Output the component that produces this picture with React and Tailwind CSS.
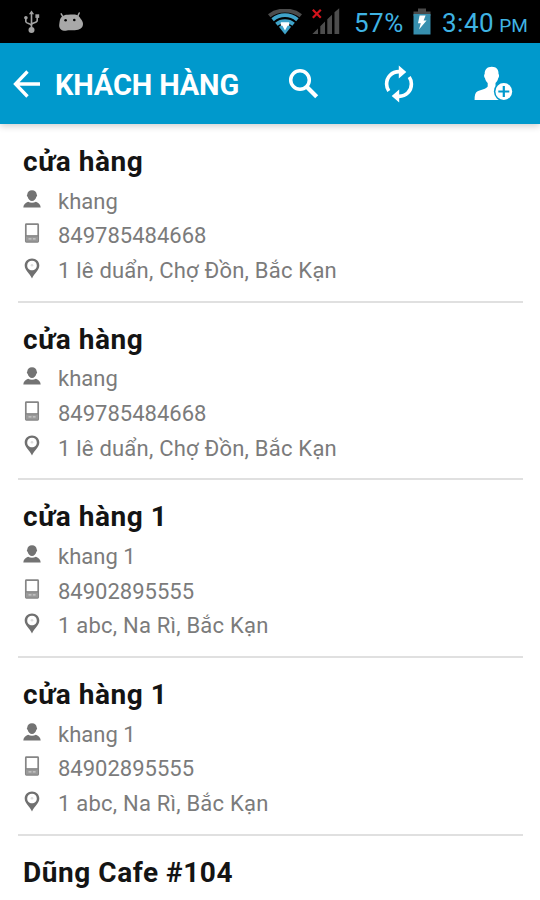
const CUSTOMERS = [
  { id: 1, store: 'cửa hàng', name: 'khang', phone: '849785484668', address: '1 lê duẩn, Chợ Đồn, Bắc Kạn' },
  { id: 2, store: 'cửa hàng', name: 'khang', phone: '849785484668', address: '1 lê duẩn, Chợ Đồn, Bắc Kạn' },
  { id: 3, store: 'cửa hàng 1', name: 'khang 1', phone: '84902895555', address: '1 abc, Na Rì, Bắc Kạn' },
  { id: 4, store: 'cửa hàng 1', name: 'khang 1', phone: '84902895555', address: '1 abc, Na Rì, Bắc Kạn' },
  { id: 5, store: 'Dũng Cafe #104', name: '', phone: '', address: '' },
]

/* ===== Status bar icons ===== */

function UsbIcon() {
  return (
    <svg width="16" height="24" viewBox="0 0 16 24" fill="none" stroke="#a3a3a3" strokeWidth="1.6">
      <path d="M7.5 3v16M1.8 7.500v4c0 2.500 5.700 1.700 5.700 4.500M13.200 6.500v4c0 2.700-5.700 1.800-5.700 4.500" />
      <path d="M7.5 0.4l2.6 3.8H4.9z" fill="#a3a3a3" stroke="none" />
      <circle cx="1.9" cy="7.8" r="1.8" fill="#a3a3a3" stroke="none" />
      <rect x="11.4" y="4.3" width="3.8" height="3.6" fill="#a3a3a3" stroke="none" />
      <circle cx="7.5" cy="20" r="3" fill="#a3a3a3" stroke="none" />
    </svg>
  )
}

function DebugIcon() {
  return (
    <svg width="26" height="20" viewBox="0 0 26 20">
      <path d="M3.2 1.8l2.4 4M21.2 1l-1.8 4" stroke="#a8a8a8" strokeWidth="1.5" strokeLinecap="round" />
      <path
        d="M4 4.600C6.500 2.700 9 2.800 12.500 2.600c4-.2 7.500-.2 9.400 3 .9 1.700 2.300 2.800 2.900 5 .9 3.400-1.300 6.700-4.700 7.100-3 .6-6 .5-8.500.5-2.500 0-3.500.8-5.600.6-3.700-.5-5.300-3.300-4.700-6.700C1.700 9.300 1.900 6.300 4 4.600z"
        fill="#a8a8a8"
      />
      <circle cx="7.6" cy="8.2" r="1.3" fill="#000" />
      <circle cx="16.3" cy="8" r="1.3" fill="#000" />
    </svg>
  )
}

function WifiIcon() {
  return (
    <svg width="34" height="26" viewBox="0 0 34 26" fill="none">
      <path d="M1.2 6.8C10 -.2 24 -.2 32.8 6.8" stroke="#4c4c4c" strokeWidth="4" />
      <path d="M4.6 10.800C12 4.600 22 4.600 29.400 10.800" stroke="#3fa3c9" strokeWidth="3.800" />
      <path d="M8.400 15.200c4.900-4 12.300-4 17.200 0" stroke="#3fa3c9" strokeWidth="3.800" />
      <path d="M10.900 17.800c3.400-2.800 8.800-2.800 12.200 0L17 25.400z" fill="#3fa3c9" />
      <path d="M12.800 13.300h8.400v3.500h-1.600L17 21.600l-2.600-4.800h-1.600z" fill="#fff" />
    </svg>
  )
}

function SignalIcon() {
  return (
    <svg width="28" height="27" viewBox="0 0 28 27">
      <path d="M.4 26L6 20.4V26zM8.3 18.2l4.7-4.6V26H8.3zM15.3 11.3L20 6.7V26h-4.7zM22.5 4.2l4.7-4V26h-4.7z" fill="#4d4d4d" />
      <path d="M.8 1.8l8 8M8.8 1.8l-8 8" stroke="#d4141c" strokeWidth="2.2" />
    </svg>
  )
}

function BatteryIcon() {
  return (
    <svg width="18" height="27" viewBox="0 0 18 27">
      <path d="M5 0.5h8v3h4.5V8H.5V3.5H5z" fill="#4a4a4a" />
      <path d="M.5 6h17v20.5H.5z" fill="#378fae" />
      <path d="M6.6 7.5h6l-2 5h3L6 21.5l1.8-6.3H5z" fill="#fff" />
    </svg>
  )
}

/* ===== Action bar icons ===== */

function BackIcon() {
  return (
    <svg width="28" height="28" viewBox="0 0 28 28" fill="none" stroke="#fff" strokeWidth="3.3">
      <path d="M14.5 1.5L2.5 14l12 12.5M3 14h24" />
    </svg>
  )
}

function SearchIcon() {
  return (
    <svg width="32" height="32" viewBox="0 0 32 32" fill="none" stroke="#fff">
      <circle cx="12" cy="12" r="9.3" strokeWidth="3.5" />
      <path d="M18.7 18.7l10 10" strokeWidth="4.3" />
    </svg>
  )
}

function SyncIcon() {
  return (
    <svg width="30" height="38" viewBox="0 0 30 38">
      <path d="M17 6.6h-2C7.8 6.6 2.6 12 2.6 19c0 2.7.8 5 2.2 7" fill="none" stroke="#fff" strokeWidth="3.6" />
      <path d="M13 31.4h2c7.2 0 12.4-5.4 12.4-12.4 0-2.7-.8-5-2.2-7" fill="none" stroke="#fff" strokeWidth="3.6" />
      <path d="M14.8.4l7.5 6.6-7.5 6.6zM15.2 37.600l-7.5-6.6 7.5-6.6z" fill="#fff" />
    </svg>
  )
}

function AddUserIcon() {
  return (
    <svg width="39" height="35" viewBox="0 0 39 35">
      <path
        d="M17.8.8c4.6 0 7 2.8 6.7 7.2.9.6.7 3.2-.3 4.2-.5 2.2-1.4 3.6-2.7 4.7v3.5c1 2.2 7.5 3.3 9.6 5.6V34H.6c0-4.5.4-7.4 3-8.7 3.2-1.6 8.9-2.5 10.1-4.9v-3.5c-1.3-1.1-2.2-2.5-2.7-4.7-1-1-1.3-3.6-.3-4.2C10.5 3.6 13.2.8 17.8.8z"
        fill="#fff"
      />
      <circle cx="29.8" cy="25.5" r="9.9" fill="#0099cc" />
      <circle cx="29.8" cy="25.5" r="8.4" fill="#fff" />
      <path d="M29.8 20v11M24.3 25.5h11" stroke="#0099cc" strokeWidth="2.2" />
    </svg>
  )
}

/* ===== Row icons ===== */

function PersonIcon() {
  return (
    <svg width="18" height="18" viewBox="0 0 18 18" fill="#737373">
      <path d="M9 .2c2.9 0 4.6 1.8 4.7 4.3.7.5.5 1.7-.3 2.2-.7 2.5-2.3 4.3-4.4 4.3S5.3 9.2 4.6 6.7c-.8-.5-1-1.7-.3-2.2C4.4 2 6.1.2 9 .2z" />
      <path d="M.3 17.4c.2-2.800 1.900-4.800 4.800-5.700C7.5 13.1 10.5 13.1 12.9 11.700c2.900.9 4.600 2.900 4.800 5.700z" />
    </svg>
  )
}

function PhoneIcon() {
  return (
    <svg width="16" height="20" viewBox="0 0 16 20">
      <rect x="1.8" y="1.2" width="12.4" height="17.6" rx="0.6" fill="none" stroke="#858585" strokeWidth="1.7" />
      <path d="M2 12.8h12v5.7H2z" fill="#999" />
      <path d="M2 12.8h12" stroke="#808080" strokeWidth="1.2" />
      <path d="M4.500 15.8h3M8.800 15.8h2.800" stroke="#ccc" strokeWidth="1.2" />
    </svg>
  )
}

function PinIcon() {
  return (
    <svg width="16" height="21" viewBox="0 0 16 21">
      <path
        d="M8 .5C3.8.5.7 3.5.7 7.5.7 12 5.5 15 8 20.500c2.5-5.5 7.3-8.5 7.3-13C15.3 3.5 12.2.5 8 .5zm0 2.3c2.8 0 4.8 2 4.8 4.7S10.8 12.3 8 12.3 3.2 10.2 3.2 7.5 5.2 2.8 8 2.8z"
        fill="#707070"
        fillRule="evenodd"
      />
      <circle cx="8" cy="7.3" r="1.3" fill="#ddd" />
    </svg>
  )
}

function InfoRow({ icon, children }) {
  return (
    <div className="flex h-[34.7px] items-center">
      <div className="flex w-[35px] shrink-0 pb-[6px]">
        <div className="flex w-[18px] justify-center">{icon}</div>
      </div>
      <span className="whitespace-nowrap text-[22px] leading-none">{children}</span>
    </div>
  )
}

function CustomerItem({ customer }) {
  return (
    <li className="mr-[17px] ml-[18px] h-[177.7px] border-b-2 border-[#e0e0e0] pt-[18px] pl-[5px] text-[#7b7b7b]">
      <h2 className="h-[41.4px] whitespace-nowrap text-[28px] leading-[38px] font-bold tracking-[0.55px] text-[#141414]">
        {customer.store}
      </h2>
      <InfoRow icon={<PersonIcon />}>{customer.name}</InfoRow>
      <InfoRow icon={<PhoneIcon />}>{customer.phone}</InfoRow>
      <InfoRow icon={<PinIcon />}>
        <span className="tracking-[0.22px]">{customer.address}</span>
      </InfoRow>
    </li>
  )
}

export default function App() {
  return (
    <div className="flex h-[900px] w-[540px] flex-col overflow-hidden bg-white font-['Roboto',sans-serif]">
      <div className="flex h-[43px] shrink-0 items-center bg-black pl-6 text-[26px] leading-none text-[#3fb3e3]">
        <UsbIcon />
        <div className="ml-[18px]">
          <DebugIcon />
        </div>
        <div className="ml-auto flex w-[272px] items-center">
          <WifiIcon />
          <div className="ml-[10px]">
            <SignalIcon />
          </div>
          <span className="ml-[14px] w-[51px] pt-[3px] tracking-[0.5px]">57%</span>
          <div className="ml-[8px]">
            <BatteryIcon />
          </div>
          <span className="ml-[11px] flex items-baseline pt-[3px] whitespace-nowrap">
            <span className="tracking-[0.5px]">3:40</span>
            <span className="ml-[5px] text-[19px]">PM</span>
          </span>
        </div>
      </div>

      <header className="z-10 flex h-[81px] shrink-0 items-center bg-[#0099cc] pl-[13px] shadow-[0_2px_7px_rgba(0,0,0,0.2)]">
        <BackIcon />
        <h1 className="ml-[14px] w-[233px] pt-[3px] text-[29px] leading-none font-bold tracking-[-0.15px] whitespace-nowrap text-white">
          KHÁCH HÀNG
        </h1>
        <SearchIcon />
        <div className="ml-[64px]">
          <SyncIcon />
        </div>
        <div className="ml-[60px]">
          <AddUserIcon />
        </div>
      </header>

      <ul className="h-[776px] pt-px">
        {CUSTOMERS.map((customer) => (
          <CustomerItem key={customer.id} customer={customer} />
        ))}
      </ul>
    </div>
  )
}
